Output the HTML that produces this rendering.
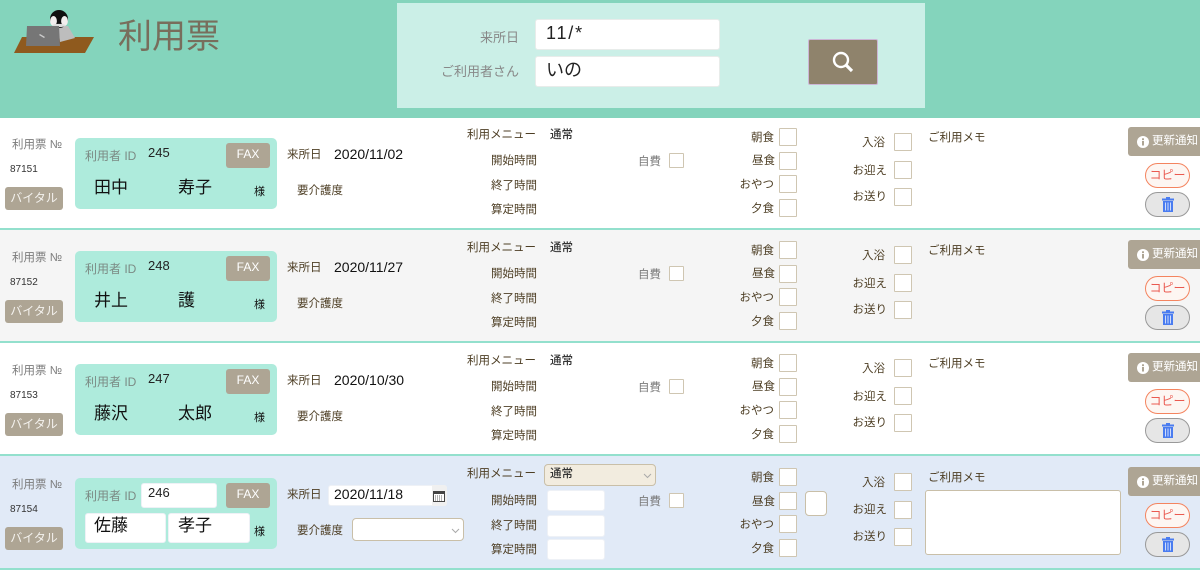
<!DOCTYPE html>
<html lang="ja"><head><meta charset="utf-8"><title>利用票</title>
<style>
html,body{margin:0;padding:0;background:#fff}
body{width:1200px;height:571px;overflow:hidden;position:relative;font-family:"Liberation Sans","Noto Sans CJK JP",sans-serif;color:#5a4a2e}
#hd{position:absolute;left:0;top:0;width:1200px;height:118px;background:#84d4bc;z-index:2}
#hd svg{position:absolute;left:0;top:0}
#title{position:absolute;left:118px;top:15px;font-size:34px;line-height:44px;color:#786e5c}
#panel{position:absolute;left:397px;top:3px;width:528px;height:105px;background:#cbefe7}
.hl{position:absolute;white-space:nowrap;font-size:13px;line-height:16px;color:#888;text-align:right;width:100px;left:419px}
.hi{position:absolute;left:535px;height:29px;padding-left:10px;background:#fff;border:1px solid #e8ecea;border-radius:3px;font-size:18px;line-height:27px;color:#222;width:173px}
#sb{position:absolute;left:808px;top:39px;width:68px;height:44px;background:#8f836c;border:1px solid #cdb6d6;border-radius:2px}
.r{position:absolute;left:0;width:1200px;height:113px;overflow:hidden}
.r:after{content:"";position:absolute;left:0;top:111px;width:1200px;height:2px;background:#93e0cd}
.r>*{position:absolute;white-space:nowrap}
.t{font-size:11.5px;line-height:16px;color:#4d3e24;transform:translateY(1px)}
.g{color:#7b7b7b}
.no{left:12px;top:20px;font-size:11.5px;line-height:16px;color:#7b7b7b}
.num{left:10px;top:45px;font-size:10px;line-height:16px;color:#333}
.bt{background:#aea594;color:#fff;border-radius:3px;text-align:center}
.vit{left:5px;top:70px;width:58px;height:23px;font-size:12px;line-height:22px;color:#f4f2ee}
.card{left:75px;top:21px;width:202px;height:71px;background:#aeebdc;border-radius:5px}
.idl{left:85px;top:31px;font-size:12px;line-height:16px;color:#7b8a84}
.idv{left:148px;top:28px;font-size:13px;line-height:16px;color:#222}
.fax{left:226px;top:26px;width:44px;height:25px;font-size:12px;line-height:23px}
.nm{top:60px;font-size:17px;line-height:22px;color:#111}
.sama{left:254px;top:67px;font-size:11px;line-height:16px;color:#111}
.d{left:334px;top:29px;font-size:14px;line-height:16px;color:#111}
.rl{text-align:right;width:90px;font-size:11.5px;line-height:16px;color:#4d3e24;transform:translateY(1px)}
.m{left:550px;font-size:11.5px;line-height:16px;color:#333;font-weight:500;transform:translateY(1px)}
.cb{width:16px;height:16px;border:1.5px solid #cfc6b2;box-sizing:content-box;background:#fff;border-radius:1px}
.upd{left:1128px;top:10px;width:76px;height:29px;background:#aea594;border-radius:3px;color:#fff;font-size:11.5px;line-height:29px}
.upd svg{position:absolute;left:9px;top:9px}
.upd span{position:absolute;left:24px;top:0}
.cp{left:1145px;top:46px;width:43px;height:23px;border:1.5px solid #f4845f;border-radius:13px;background:#fdf6f2;color:#ea5a50;text-align:center;font-size:12px;line-height:23px}
.tr{left:1145px;top:75px;width:43px;height:23px;border:1.5px solid #999;border-radius:13px;background:#e6e6e6}
.tr svg{position:absolute;left:15px;top:4px}
.in{background:#fff;border-radius:3px;box-sizing:border-box;border:1px solid #eef1f6}
.sel{box-sizing:border-box;border:1.5px solid #c9bfa8;border-radius:4px;background:#fff}
.b4:after{top:112px}
</style></head><body>
<div id="hd">
<svg width="110" height="60" viewBox="0 0 110 60">
<polygon points="14,53 22,37 94,37 85,53" fill="#8f5a1e"/>
<polygon points="58,26 68,26 75,38 60,42" fill="#bdbdbd"/>
<ellipse cx="59" cy="19" rx="9" ry="9" fill="#111"/>
<ellipse cx="53.5" cy="21" rx="3.4" ry="5" fill="#f2eeee"/>
<ellipse cx="64.5" cy="21" rx="3.4" ry="5" fill="#f2eeee"/>
<ellipse cx="59" cy="25.5" rx="6.5" ry="1.6" fill="#ddd"/>
<polygon points="27,26 59,26 60,46 26,46" fill="#767676"/>
<polygon points="40,34 45,37 44,38 39,35" fill="#ccc"/>
</svg>
<div id="title">利用票</div>
<div id="panel"></div>
<div class="hl" style="top:30px">来所日</div>
<div class="hl" style="top:64px">ご利用者さん</div>
<div class="hi" style="top:19px;letter-spacing:1.8px">11/*</div>
<div class="hi" style="top:56px">いの</div>
<div id="sb"><svg width="68" height="44" viewBox="0 0 68 44"><circle cx="32" cy="20" r="7" fill="none" stroke="#fff" stroke-width="2.4"/><line x1="37" y1="25" x2="43" y2="31" stroke="#fff" stroke-width="3.2"/></svg></div>
</div>

<div class="r" style="top:117px;background:#fff">
<div class="no">利用票 №</div><div class="num">87151</div><div class="bt vit">バイタル</div>
<div class="card"></div><div class="idl">利用者 ID</div><div class="idv">245</div><div class="bt fax">FAX</div>
<div class="nm" style="left:94px">田中</div><div class="nm" style="left:178px">寿子</div><div class="sama">様</div>
<div class="t" style="left:287px;top:29px">来所日</div><div class="d">2020/11/02</div>
<div class="t" style="left:297px;top:65px">要介護度</div>
<div class="rl" style="left:446px;top:9px">利用メニュー</div><div class="m" style="top:9px">通常</div>
<div class="rl" style="left:447px;top:35px">開始時間</div><div class="rl" style="left:447px;top:60px">終了時間</div><div class="rl" style="left:447px;top:84px">算定時間</div>
<div class="t g" style="left:638px;top:36px">自費</div><div class="cb" style="left:669px;top:36px;width:13px;height:13px"></div>
<div class="rl" style="left:684px;top:12px">朝食</div><div class="cb" style="left:779px;top:11px"></div>
<div class="rl" style="left:685px;top:35px">昼食</div><div class="cb" style="left:779px;top:35px"></div>
<div class="rl" style="left:684px;top:59px">おやつ</div><div class="cb" style="left:779px;top:58px"></div>
<div class="rl" style="left:684px;top:83px">夕食</div><div class="cb" style="left:779px;top:82px"></div>
<div class="rl" style="left:795px;top:17px">入浴</div><div class="cb" style="left:894px;top:16px"></div>
<div class="rl" style="left:797px;top:45px">お迎え</div><div class="cb" style="left:894px;top:44px"></div>
<div class="rl" style="left:797px;top:71px">お送り</div><div class="cb" style="left:894px;top:71px"></div>
<div class="t" style="left:928px;top:12px">ご利用メモ</div>
<div class="upd"><svg width="12" height="12" viewBox="0 0 12 12"><circle cx="6" cy="6" r="6" fill="#fff"/><rect x="5" y="5" width="2" height="4.5" fill="#aea594"/><rect x="5" y="2.3" width="2" height="1.8" fill="#aea594"/></svg><span>更新通知</span></div>
<div class="cp">コピー</div>
<div class="tr"><svg width="14" height="15" viewBox="0 0 14 15"><rect x="1" y="1.5" width="12" height="2" fill="#4a7cf0"/><rect x="5" y="0" width="4" height="2" fill="#4a7cf0"/><path d="M2 4h10v11H2z" fill="#4a7cf0"/><path d="M4.5 5.5v8M7 5.5v8M9.5 5.5v8" stroke="#cfdcfb" stroke-width="1"/></svg></div>
</div>

<div class="r" style="top:230px;background:#f5f5f5">
<div class="no">利用票 №</div><div class="num">87152</div><div class="bt vit">バイタル</div>
<div class="card"></div><div class="idl">利用者 ID</div><div class="idv">248</div><div class="bt fax">FAX</div>
<div class="nm" style="left:94px">井上</div><div class="nm" style="left:178px">護</div><div class="sama">様</div>
<div class="t" style="left:287px;top:29px">来所日</div><div class="d">2020/11/27</div>
<div class="t" style="left:297px;top:65px">要介護度</div>
<div class="rl" style="left:446px;top:9px">利用メニュー</div><div class="m" style="top:9px">通常</div>
<div class="rl" style="left:447px;top:35px">開始時間</div><div class="rl" style="left:447px;top:60px">終了時間</div><div class="rl" style="left:447px;top:84px">算定時間</div>
<div class="t g" style="left:638px;top:36px">自費</div><div class="cb" style="left:669px;top:36px;width:13px;height:13px"></div>
<div class="rl" style="left:684px;top:12px">朝食</div><div class="cb" style="left:779px;top:11px"></div>
<div class="rl" style="left:685px;top:35px">昼食</div><div class="cb" style="left:779px;top:35px"></div>
<div class="rl" style="left:684px;top:59px">おやつ</div><div class="cb" style="left:779px;top:58px"></div>
<div class="rl" style="left:684px;top:83px">夕食</div><div class="cb" style="left:779px;top:82px"></div>
<div class="rl" style="left:795px;top:17px">入浴</div><div class="cb" style="left:894px;top:16px"></div>
<div class="rl" style="left:797px;top:45px">お迎え</div><div class="cb" style="left:894px;top:44px"></div>
<div class="rl" style="left:797px;top:71px">お送り</div><div class="cb" style="left:894px;top:71px"></div>
<div class="t" style="left:928px;top:12px">ご利用メモ</div>
<div class="upd"><svg width="12" height="12" viewBox="0 0 12 12"><circle cx="6" cy="6" r="6" fill="#fff"/><rect x="5" y="5" width="2" height="4.5" fill="#aea594"/><rect x="5" y="2.3" width="2" height="1.8" fill="#aea594"/></svg><span>更新通知</span></div>
<div class="cp">コピー</div>
<div class="tr"><svg width="14" height="15" viewBox="0 0 14 15"><rect x="1" y="1.5" width="12" height="2" fill="#4a7cf0"/><rect x="5" y="0" width="4" height="2" fill="#4a7cf0"/><path d="M2 4h10v11H2z" fill="#4a7cf0"/><path d="M4.5 5.5v8M7 5.5v8M9.5 5.5v8" stroke="#cfdcfb" stroke-width="1"/></svg></div>
</div>

<div class="r" style="top:343px;background:#fff">
<div class="no">利用票 №</div><div class="num">87153</div><div class="bt vit">バイタル</div>
<div class="card"></div><div class="idl">利用者 ID</div><div class="idv">247</div><div class="bt fax">FAX</div>
<div class="nm" style="left:94px">藤沢</div><div class="nm" style="left:178px">太郎</div><div class="sama">様</div>
<div class="t" style="left:287px;top:29px">来所日</div><div class="d">2020/10/30</div>
<div class="t" style="left:297px;top:65px">要介護度</div>
<div class="rl" style="left:446px;top:9px">利用メニュー</div><div class="m" style="top:9px">通常</div>
<div class="rl" style="left:447px;top:35px">開始時間</div><div class="rl" style="left:447px;top:60px">終了時間</div><div class="rl" style="left:447px;top:84px">算定時間</div>
<div class="t g" style="left:638px;top:36px">自費</div><div class="cb" style="left:669px;top:36px;width:13px;height:13px"></div>
<div class="rl" style="left:684px;top:12px">朝食</div><div class="cb" style="left:779px;top:11px"></div>
<div class="rl" style="left:685px;top:35px">昼食</div><div class="cb" style="left:779px;top:35px"></div>
<div class="rl" style="left:684px;top:59px">おやつ</div><div class="cb" style="left:779px;top:58px"></div>
<div class="rl" style="left:684px;top:83px">夕食</div><div class="cb" style="left:779px;top:82px"></div>
<div class="rl" style="left:795px;top:17px">入浴</div><div class="cb" style="left:894px;top:16px"></div>
<div class="rl" style="left:797px;top:45px">お迎え</div><div class="cb" style="left:894px;top:44px"></div>
<div class="rl" style="left:797px;top:71px">お送り</div><div class="cb" style="left:894px;top:71px"></div>
<div class="t" style="left:928px;top:12px">ご利用メモ</div>
<div class="upd"><svg width="12" height="12" viewBox="0 0 12 12"><circle cx="6" cy="6" r="6" fill="#fff"/><rect x="5" y="5" width="2" height="4.5" fill="#aea594"/><rect x="5" y="2.3" width="2" height="1.8" fill="#aea594"/></svg><span>更新通知</span></div>
<div class="cp">コピー</div>
<div class="tr"><svg width="14" height="15" viewBox="0 0 14 15"><rect x="1" y="1.5" width="12" height="2" fill="#4a7cf0"/><rect x="5" y="0" width="4" height="2" fill="#4a7cf0"/><path d="M2 4h10v11H2z" fill="#4a7cf0"/><path d="M4.5 5.5v8M7 5.5v8M9.5 5.5v8" stroke="#cfdcfb" stroke-width="1"/></svg></div>
</div>

<div class="r b4" style="top:456px;background:#e1eaf7;height:114px">
<div class="no" style="top:21px">利用票 №</div><div class="num" style="top:46px">87154</div><div class="bt vit" style="top:71px">バイタル</div>
<div class="card" style="top:22px"></div><div class="idl" style="top:32px">利用者 ID</div>
<div class="in" style="left:141px;top:27px;width:76px;height:25px"></div><div class="idv" style="top:29px">246</div><div class="bt fax" style="top:27px">FAX</div>
<div class="in" style="left:85px;top:57px;width:81px;height:30px"></div><div class="in" style="left:168px;top:57px;width:82px;height:30px"></div>
<div class="nm" style="left:94px;top:59px">佐藤</div><div class="nm" style="left:178px;top:59px">孝子</div><div class="sama" style="top:68px">様</div>
<div class="t" style="left:287px;top:30px">来所日</div>
<div class="in" style="left:328px;top:29px;width:119px;height:21px"></div>
<div style="left:432px;top:29px;width:15px;height:21px;background:#f0f0f0;border-radius:0 3px 3px 0"></div>
<svg style="left:433px;top:35px" width="12" height="11" viewBox="0 0 12 11"><rect x="0.5" y="0.5" width="11" height="10" fill="#fff" stroke="#444"/><rect x="0.5" y="0.5" width="11" height="2.5" fill="#444"/><path d="M2 5h8M2 7h8M2 9h8" stroke="#666" stroke-dasharray="1 1"/></svg>
<div class="d" style="top:30px">2020/11/18</div>
<div class="t" style="left:297px;top:66px">要介護度</div>
<div class="sel" style="left:352px;top:62px;width:112px;height:23px"></div>
<svg style="left:451px;top:72px" width="9" height="6" viewBox="0 0 9 6"><path d="M1 1l3.5 3.5L8 1" fill="none" stroke="#aaa"/></svg>
<div class="rl" style="left:446px;top:9px">利用メニュー</div>
<div class="sel" style="left:544px;top:8px;width:112px;height:22px;background:#f2ecdf"></div>
<svg style="left:643px;top:17px" width="9" height="6" viewBox="0 0 9 6"><path d="M1 1l3.5 3.5L8 1" fill="none" stroke="#aaa"/></svg>
<div class="m" style="top:9px">通常</div>
<div class="rl" style="left:447px;top:36px">開始時間</div><div class="rl" style="left:447px;top:61px">終了時間</div><div class="rl" style="left:447px;top:85px">算定時間</div>
<div class="in" style="left:547px;top:34px;width:58px;height:21px"></div><div class="in" style="left:547px;top:59px;width:58px;height:22px"></div><div class="in" style="left:547px;top:83px;width:58px;height:21px"></div>
<div class="t g" style="left:638px;top:37px">自費</div><div class="cb" style="left:669px;top:37px;width:13px;height:13px"></div>
<div class="rl" style="left:684px;top:13px">朝食</div><div class="cb" style="left:779px;top:12px"></div>
<div class="rl" style="left:685px;top:37px">昼食</div><div class="cb" style="left:779px;top:36px"></div>
<div class="rl" style="left:684px;top:60px">おやつ</div><div class="cb" style="left:779px;top:59px"></div>
<div class="rl" style="left:684px;top:84px">夕食</div><div class="cb" style="left:779px;top:83px"></div>
<div class="sel" style="left:805px;top:35px;width:22px;height:25px"></div>
<div class="rl" style="left:795px;top:18px">入浴</div><div class="cb" style="left:894px;top:17px"></div>
<div class="rl" style="left:797px;top:45px">お迎え</div><div class="cb" style="left:894px;top:45px"></div>
<div class="rl" style="left:797px;top:72px">お送り</div><div class="cb" style="left:894px;top:72px"></div>
<div class="t" style="left:928px;top:13px">ご利用メモ</div>
<div class="sel" style="left:925px;top:34px;width:196px;height:65px;border-radius:3px"></div>
<div class="upd" style="top:11px"><svg width="12" height="12" viewBox="0 0 12 12"><circle cx="6" cy="6" r="6" fill="#fff"/><rect x="5" y="5" width="2" height="4.5" fill="#aea594"/><rect x="5" y="2.3" width="2" height="1.8" fill="#aea594"/></svg><span>更新通知</span></div>
<div class="cp" style="top:47px">コピー</div>
<div class="tr" style="top:76px"><svg width="14" height="15" viewBox="0 0 14 15"><rect x="1" y="1.5" width="12" height="2" fill="#4a7cf0"/><rect x="5" y="0" width="4" height="2" fill="#4a7cf0"/><path d="M2 4h10v11H2z" fill="#4a7cf0"/><path d="M4.5 5.5v8M7 5.5v8M9.5 5.5v8" stroke="#cfdcfb" stroke-width="1"/></svg></div>
</div>
</body></html>
